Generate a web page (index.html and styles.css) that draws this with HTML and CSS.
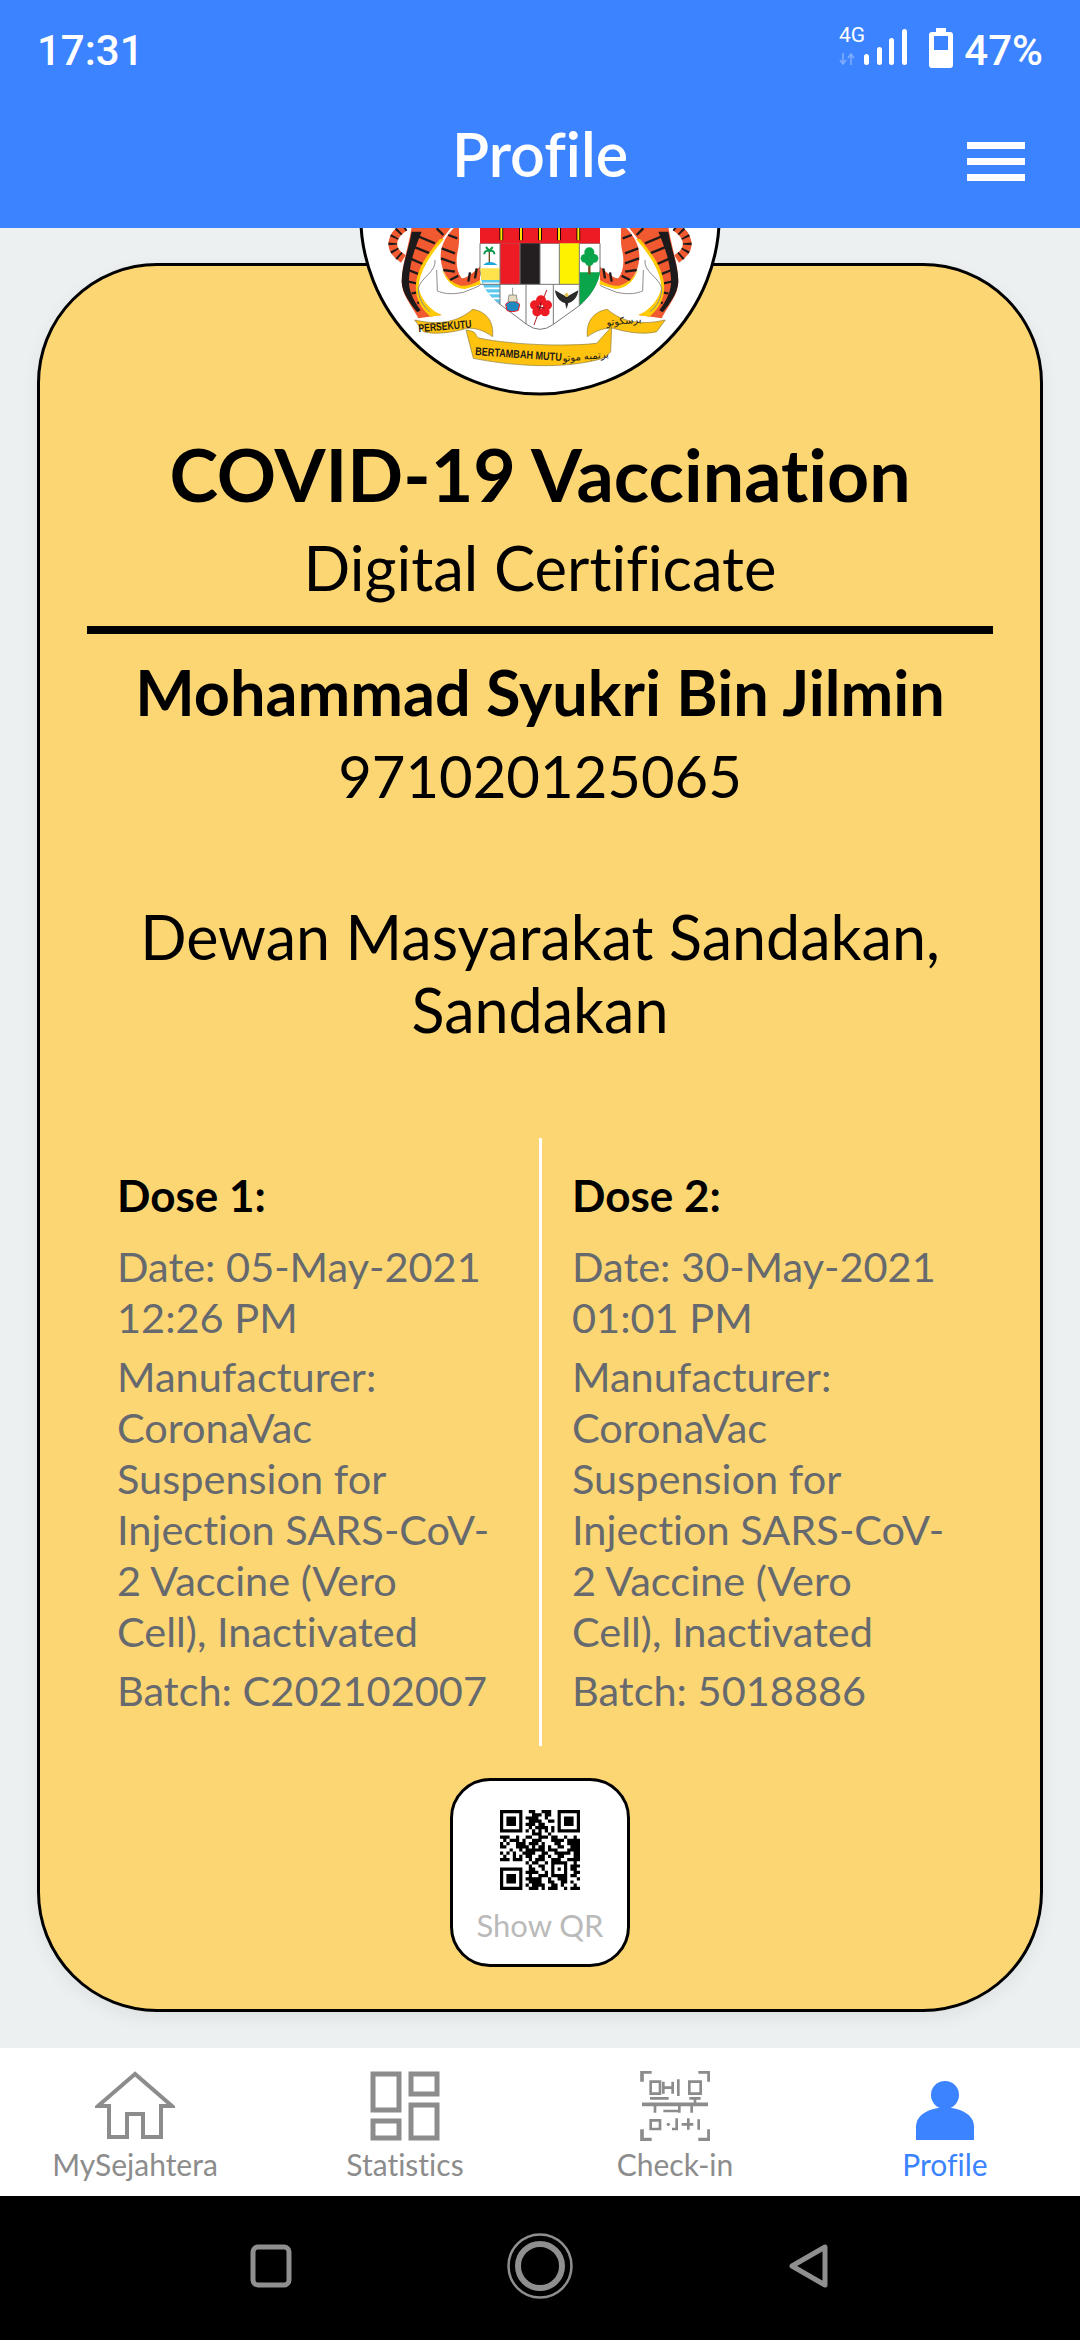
FILE: index.html
```html
<!DOCTYPE html>
<html lang="en">
<head>
    <meta charset="UTF-8">
    <meta name="viewport" content="width=device-width, initial-scale=1.0">
    <title>Profile</title>
    <link rel="stylesheet" href="styles.css">
</head>
<body>
    <header class="topbar">
        <div class="status">
            <span class="clock">17:31</span>
            <div class="status-right">
                <svg class="signal" width="70" height="64" viewBox="0 0 70 64">
                    <text x="1" y="24" class="net">4G</text>
                    <path d="M5 35v11M2 42l3 4 3-4M13 47V36M10 40l3-4 3 4" fill="none" stroke="#fff" stroke-opacity=".35" stroke-width="1.5"/>
                    <rect x="26" y="36" width="5" height="11" rx="2.5" fill="#fff"/>
                    <rect x="39" y="29" width="5" height="18" rx="2.5" fill="#fff"/>
                    <rect x="51" y="20" width="5" height="27" rx="2.5" fill="#fff"/>
                    <rect x="64" y="11" width="5" height="36" rx="2.5" fill="#fff"/>
                </svg>
                <svg class="battery" width="24" height="40" viewBox="0 0 24 40">
                    <path d="M7 0h10v4h4a3 3 0 0 1 3 3v30a3 3 0 0 1-3 3H3a3 3 0 0 1-3-3V7a3 3 0 0 1 3-3h4z" fill="#fff"/>
                    <rect x="5" y="8" width="14" height="14" fill="#3c83ff"/>
                </svg>
                <span class="percent">47%</span>
            </div>
        </div>
        <div class="titlebar">
            <h1 class="title">Profile</h1>
            <div class="burger"><i></i><i></i><i></i></div>
        </div>
    </header>

    <main class="content">
        <section class="card">
            <!-- emblem, drawn over the top of the card -->
            <svg class="emblem" width="400" height="190" viewBox="0 0 1200 570">
                <ellipse cx="600" cy="0" rx="538" ry="537" fill="#fff" stroke="#000" stroke-width="9"/>
                <g id="tiger">
                    <path d="M195 35C155 60 140 100 190 132" fill="none" stroke="#f15a31" stroke-width="26"/>
                    <path d="M195 35C155 60 140 100 190 132" fill="none" stroke="#1c1a1a" stroke-width="26" stroke-dasharray="6 15"/>
                    <path d="M215 35H335C300 80 260 130 240 175 225 210 235 250 270 285L305 300 235 310C215 270 185 240 185 200 185 150 205 100 215 35z" fill="#f15a31"/>
                    <path d="M215 50C205 110 185 150 185 200 187 235 210 265 232 292L242 286C215 250 205 220 207 190 212 130 225 100 245 50z" fill="#1c1a1a"/>
                    <path d="M225 60L285 85M220 95L270 115M210 130L255 150M205 165L238 178M205 200L230 205M215 235L235 232M232 265L250 255M290 40L310 60" fill="none" stroke="#1c1a1a" stroke-width="7"/>
                    <path d="M312 72C270 120 238 170 236 215 240 250 270 285 305 300L272 305C235 275 225 240 228 205 235 150 270 110 300 72z" fill="#ffcb05"/>
                    <path d="M345 35C320 60 300 90 302 130 305 170 325 205 360 215 385 215 410 210 420 195V155C405 165 385 190 365 190 350 170 345 140 355 100 360 70 355 50 358 35z" fill="#f15a31"/>
                    <path d="M305 160C315 195 340 222 375 222L422 208 420 195C400 208 380 214 362 212 335 205 315 185 305 160z" fill="#ffcb05"/>
                    <path d="M305 100L345 115M303 130L345 145M310 165L345 170M330 195L355 182M385 200L390 172M405 190L410 160M325 60L352 70" fill="none" stroke="#1c1a1a" stroke-width="7"/>
                    <path d="M285 135C290 170 240 190 235 220 235 250 250 275 270 290M290 165L292 228C310 235 330 240 370 232 400 220 415 215 420 210" fill="none" stroke="#8d8d8d" stroke-width="3"/>
                    <path d="M224 315C290 330 350 325 398 283 440 290 462 320 458 365 430 345 405 338 380 340 340 352 290 360 250 350z" fill="#ffc20e" stroke="#8a7a3a" stroke-width="2"/>
                </g>
                <use href="#tiger" transform="matrix(-1 0 0 1 1200 0)"/>
                <text class="ribbon" x="236" y="352" textLength="160" lengthAdjust="spacingAndGlyphs" transform="rotate(-5 236 352)">PERSEKUTU</text>
                <text class="ribbon-jawi" x="800" y="332" transform="rotate(-5 800 332)">برسكوتو</text>

                <path d="M420 85H780V165C775 205 750 245 718 272L640 328Q600 358 560 328L480 268C445 240 425 205 420 165z" fill="#fff" stroke="#777" stroke-width="3"/>
                <rect x="420" y="30" width="360" height="55" fill="#ed1c24"/>
                <path d="M484 30v46M543 30v46M600 30v46M657 30v46M715 30v46" stroke="#000" stroke-width="11"/>
                <path d="M484 30v46M543 30v46M600 30v46M657 30v46M715 30v46" stroke="#ffe500" stroke-width="6"/>
                <rect x="480" y="85" width="60" height="123" fill="#ed1c24"/>
                <rect x="540" y="85" width="60" height="123" fill="#231f20"/>
                <rect x="658" y="85" width="60" height="123" fill="#fff200"/>
                <path d="M421 160h59v35h-56z" fill="#ffe34d"/>
                <path d="M424 195H480V268C450 245 432 222 424 195z" fill="#5cc8ee"/>
                <path d="M430 205h50M436 220h44M445 235h35M458 250h22" stroke="#fff" stroke-width="5"/>
                <path d="M448 145v-40" stroke="#6d4c1d" stroke-width="4"/>
                <path d="M448 108c-15-5-15 10-15 10M448 108c15-5 15 10 15 10M448 108l-10-12M448 108l10-12" fill="none" stroke="#0a9a4a" stroke-width="6"/>
                <path d="M430 150c10-12 30-12 42 0z" fill="#1aa7d8"/>
                <path d="M718 172H780C775 210 750 245 718 272z" fill="#0aa54a"/>
                <path d="M748 178v-28" stroke="#7a4a1d" stroke-width="7"/>
                <circle cx="748" cy="112" r="15" fill="#0aa54a"/>
                <circle cx="735" cy="130" r="13" fill="#0aa54a"/>
                <circle cx="762" cy="130" r="13" fill="#0aa54a"/>
                <circle cx="748" cy="140" r="13" fill="#0aa54a"/>
                <path d="M420 208H718M480 85V268M540 85V208M600 85V208M658 85V208M718 85V272M558 208V328M640 208V328" stroke="#777" stroke-width="3" fill="none"/>
                <path d="M497 268c10-12 30-12 42 0l-4 18c-10 5-28 5-34 0z" fill="#1f8ac0" stroke="#ed1c24" stroke-width="3"/>
                <path d="M518 218v22M507 240h22l3 20h-28z" fill="#e8dcc0" stroke="#666" stroke-width="2"/>
                <path d="M582 330L600 280 620 225" fill="none" stroke="#b0202a" stroke-width="3"/>
                <g fill="#ed1c24">
                    <circle cx="603" cy="256" r="15"/>
                    <circle cx="584" cy="270" r="14"/>
                    <circle cx="622" cy="270" r="14"/>
                    <circle cx="591" cy="290" r="14"/>
                    <circle cx="615" cy="290" r="14"/>
                </g>
                <path d="M603 262l-6 24M590 275l24 4" stroke="#7a1016" stroke-width="3"/>
                <path d="M680 245C670 240 655 232 645 226 647 246 660 262 675 264L680 282 685 264C700 262 713 246 715 226 705 232 690 240 680 245z" fill="#2a2a2a"/>
                <circle cx="680" cy="240" r="6" fill="#e5c34a"/>
                <path d="M378 345C420 350 400 365 420 370 520 390 680 395 770 385L815 335 812 410C800 425 790 430 770 435 650 465 500 450 400 430z" fill="#ffc20e" stroke="#8a7a3a" stroke-width="2"/>
                <text class="ribbon" x="405" y="420" textLength="260" lengthAdjust="spacingAndGlyphs" transform="rotate(4 405 420)">BERTAMBAH MUTU</text>
                <text class="ribbon-jawi" x="668" y="440" textLength="140" transform="rotate(-5 668 440)">برتمبه موتو</text>
            </svg>

            <h2 class="heading">COVID-19 Vaccination</h2>
            <p class="subheading">Digital Certificate</p>
            <div class="rule"></div>
            <p class="name">Mohammad Syukri Bin Jilmin</p>
            <p class="ic">971020125065</p>
            <p class="place">Dewan Masyarakat Sandakan,<br>Sandakan</p>

            <div class="doses">
                <div class="dose dose-first">
                    <h3 class="dose-title">Dose 1:</h3>
                    <p>Date: 05-May-2021<br>12:26 PM</p>
                    <p>Manufacturer:<br>CoronaVac<br>Suspension for<br>Injection SARS-CoV-<br>2 Vaccine (Vero<br>Cell), Inactivated</p>
                    <p>Batch: C202102007</p>
                </div>
                <div class="dose dose-second">
                    <h3 class="dose-title">Dose 2:</h3>
                    <p>Date: 30-May-2021<br>01:01 PM</p>
                    <p>Manufacturer:<br>CoronaVac<br>Suspension for<br>Injection SARS-CoV-<br>2 Vaccine (Vero<br>Cell), Inactivated</p>
                    <p>Batch: 5018886</p>
                </div>
            </div>

            <button class="qr-btn">
                <svg class="qr" width="80" height="80" viewBox="0 0 25 25">
                    <path fill="none" stroke="#000" stroke-width="1" d="M0 .5h7M9 .5h2M13 .5h3M18 .5h7M0 1.5h1M6 1.5h1M10 1.5h3M14 1.5h2M18 1.5h1M24 1.5h1M0 2.5h1M2 2.5h3M6 2.5h1M8 2.5h4M14 2.5h1M18 2.5h1M20 2.5h3M24 2.5h1M0 3.5h1M2 3.5h3M6 3.5h1M9 3.5h4M15 3.5h2M18 3.5h1M20 3.5h3M24 3.5h1M0 4.5h1M2 4.5h3M6 4.5h1M8 4.5h3M12 4.5h2M18 4.5h1M20 4.5h3M24 4.5h1M0 5.5h1M6 5.5h1M9 5.5h1M11 5.5h4M16 5.5h1M18 5.5h1M24 5.5h1M0 6.5h7M8 6.5h1M10 6.5h1M12 6.5h1M14 6.5h1M16 6.5h1M18 6.5h7M10 7.5h3M15 7.5h1M0 8.5h3M5 8.5h1M8 8.5h2M12 8.5h3M16 8.5h2M20 8.5h1M23 8.5h1M1 9.5h1M3 9.5h3M7 9.5h1M10 9.5h3M16 9.5h4M21 9.5h4M0 10.5h1M2 10.5h1M5 10.5h3M9 10.5h3M13 10.5h1M17 10.5h2M21 10.5h4M0 11.5h2M5 11.5h4M10 11.5h1M12 11.5h2M15 11.5h1M18 11.5h2M22 11.5h3M3 12.5h1M6 12.5h1M8 12.5h6M15 12.5h3M21 12.5h4M0 13.5h1M2 13.5h1M4 13.5h1M7 13.5h4M13 13.5h2M17 13.5h5M23 13.5h2M1 14.5h1M4 14.5h1M6 14.5h1M8 14.5h2M12 14.5h2M15 14.5h1M18 14.5h2M23 14.5h2M0 15.5h3M4 15.5h3M9 15.5h1M11 15.5h3M16 15.5h3M21 15.5h4M8 16.5h1M10 16.5h2M14 16.5h1M16 16.5h5M23 16.5h1M9 17.5h1M12 17.5h2M16 17.5h1M20 17.5h1M22 17.5h3M0 18.5h7M9 18.5h2M13 18.5h1M16 18.5h1M18 18.5h1M20 18.5h1M22 18.5h2M0 19.5h1M6 19.5h1M8 19.5h4M14 19.5h1M16 19.5h1M20 19.5h1M23 19.5h2M0 20.5h1M2 20.5h3M6 20.5h1M9 20.5h1M12 20.5h3M16 20.5h5M22 20.5h2M0 21.5h1M2 21.5h3M6 21.5h1M8 21.5h5M15 21.5h1M18 21.5h3M24 21.5h1M0 22.5h1M2 22.5h3M6 22.5h1M9 22.5h4M15 22.5h2M19 22.5h2M22 22.5h1M0 23.5h1M6 23.5h1M8 23.5h1M10 23.5h4M16 23.5h2M19 23.5h1M23 23.5h1M0 24.5h7M9 24.5h3M13 24.5h1M15 24.5h3M20 24.5h1M22 24.5h3"/>
                </svg>
                <span class="qr-label">Show QR</span>
            </button>
        </section>
    </main>

    <nav class="tabs">
        <div class="tab">
            <svg width="80" height="70" viewBox="0 0 80 70">
                <path d="M40 3L3 35h11v31h18V43h16v23h18V35h11z" fill="none" stroke="#8c8c8c" stroke-width="4"/>
            </svg>
            <span>MySejahtera</span>
        </div>
        <div class="tab">
            <svg width="70" height="70" viewBox="0 0 70 70">
                <path d="M3 3h26v36H3zM41 3h26v20H41zM41 34h26v33H41zM3 50h26v17H3z" fill="none" stroke="#8c8c8c" stroke-width="5"/>
            </svg>
            <span>Statistics</span>
        </div>
        <div class="tab">
            <svg width="70" height="70" viewBox="30 30 210 210">
                <path d="M36 62V33H65M205 33H237V62M36 205V236H65M205 236H237V205" fill="none" stroke="#8c8c8c" stroke-width="11"/>
                <path d="M36 130H234" fill="none" stroke="#8c8c8c" stroke-width="11"/>
                <path d="M62 62H90V98H62zM100 62V98M128 62V98M100 80H128M145 55V105M178 62H212V98H178zM60 112H116M178 112H212M195 112V130M75 130V155M100 150H148M148 130V155M185 130V155M62 178H90V204H62zM140 172V204H126M175 172V206M155 190H190M206 175V206" fill="none" stroke="#8c8c8c" stroke-width="8"/>
                <circle cx="115" cy="190" r="5" fill="#8c8c8c"/>
            </svg>
            <span>Check-in</span>
        </div>
        <div class="tab tab-active">
            <svg width="60" height="60" viewBox="0 0 60 60">
                <ellipse cx="30" cy="14" rx="14" ry="14" fill="#3c83ff"/>
                <path d="M1 59V46c0-26 58-26 58 0v13z" fill="#3c83ff"/>
            </svg>
            <span>Profile</span>
        </div>
    </nav>

    <div class="sysbar">
        <svg width="42" height="44" viewBox="0 0 42 44"><rect x="3" y="3" width="36" height="38" rx="5" fill="none" stroke="#8f8f8f" stroke-width="5"/></svg>
        <svg width="66" height="66" viewBox="0 0 66 66"><circle cx="33" cy="33" r="31.5" fill="none" stroke="#8f8f8f" stroke-width="2.5"/><circle cx="33" cy="33" r="22" fill="none" stroke="#8f8f8f" stroke-width="6"/></svg>
        <svg width="42" height="46" viewBox="0 0 42 46"><path d="M37 4v38L4 23z" fill="none" stroke="#8f8f8f" stroke-width="5" stroke-linejoin="round"/></svg>
    </div>
</body>
</html>
```

FILE: styles.css
```css
* {
    box-sizing: border-box;
}

body {
    display: flex;
    flex-direction: column;
    width: 1080px;
    height: 2340px;
    margin: 0;
    overflow: hidden;
    background-color: #ecf0f1;
    font-family: "Lato", "Open Sans", sans-serif;
    font-variant-ligatures: none;
    color: #000;
}

h1, h2, h3, p {
    margin: 0;
}

/* Barra superior */
.topbar {
    position: relative;
    z-index: 2;
    height: 228px;
    background-color: #3c83ff;
    color: #fff;
}

.status {
    display: flex;
    justify-content: space-between;
    align-items: center;
    height: 100px;
    padding: 0 37px;
    font-family: "Roboto", sans-serif;
    font-size: 42px;
    font-weight: 500;
}

.status-right {
    display: flex;
    align-items: center;
    gap: 11px;
}

.signal {
    margin-right: 10px;
}

.battery {
    margin-bottom: 5px;
}

.net {
    font-family: "Roboto", sans-serif;
    font-size: 21px;
    font-weight: 400;
    fill: #fff;
}

.titlebar {
    position: relative;
    display: flex;
    justify-content: center;
    align-items: center;
    height: 112px;
    padding-bottom: 6px;
}

.title {
    font-size: 61px;
    font-weight: 600;
}

.burger {
    position: absolute;
    top: 42px;
    right: 55px;
    display: flex;
    flex-direction: column;
    gap: 9px;
    width: 58px;
}

.burger i {
    display: block;
    height: 7px;
    background-color: #fff;
}

/* Contenido */
.content {
    flex: 1;
    padding: 35px 37px 0;
}

.card {
    position: relative;
    display: flex;
    flex-direction: column;
    align-items: center;
    height: 1749px;
    padding-top: 166px;
    background-color: #fdd674;
    border: 3px solid #000;
    border-radius: 120px;
    box-shadow: 0 6px 18px rgba(0, 0, 0, 0.06);
    text-align: center;
}

.emblem {
    position: absolute;
    top: -51px;
    left: 300px;
}

.ribbon {
    font-family: "Liberation Sans", sans-serif;
    font-size: 34px;
    font-weight: 700;
    fill: #1c1a1a;
}

.ribbon-jawi {
    font-family: "DejaVu Sans", sans-serif;
    font-size: 30px;
    fill: #1c1a1a;
}

.heading {
    font-size: 73.5px;
    line-height: 84px;
    font-weight: 700;
}

.subheading {
    font-size: 61.5px;
    line-height: 70px;
    margin-top: 16px;
}

.rule {
    width: 906px;
    height: 8px;
    margin-top: 24px;
    background-color: #000;
}

.name {
    margin-top: 22px;
    font-size: 63px;
    line-height: 72px;
    font-weight: 700;
}

.ic {
    font-size: 58px;
    line-height: 70px;
    margin-top: 13px;
}

.place {
    margin-top: 89px;
    font-size: 61px;
    line-height: 73px;
}

.doses {
    display: grid;
    grid-template-columns: 502px 1fr;
    align-self: stretch;
    margin-top: 92px;
    text-align: left;
    font-size: 41.5px;
    line-height: 51px;
    color: #666a6e;
}

.dose {
    height: 608px;
    padding-top: 32px;
    white-space: nowrap;
}

.dose p {
    margin-top: 8px;
}

.dose-first {
    padding-left: 77px;
    border-right: 3px solid #fff;
}

.dose-second {
    padding-left: 30px;
}

.dose-title {
    font-size: 44px;
    line-height: 50px;
    font-weight: 700;
    color: #000;
    margin-bottom: 21px;
}

.qr-btn {
    display: flex;
    flex-direction: column;
    align-items: center;
    width: 180px;
    height: 189px;
    margin-top: 32px;
    padding: 29px 0 0;
    background-color: #fff;
    border: 3px solid #000;
    border-radius: 40px;
    font-family: inherit;
}

.qr-label {
    margin-top: 15px;
    font-size: 31px;
    line-height: 40px;
    color: #bababa;
}

/* Barra inferior */
.tabs {
    display: grid;
    grid-template-columns: repeat(4, 1fr);
    height: 148px;
    background-color: #fff;
}

.tab {
    display: flex;
    flex-direction: column;
    align-items: center;
    justify-content: flex-end;
    font-size: 30px;
    line-height: 38px;
    color: #8c8c8c;
    padding-bottom: 13px;
}

.tab svg {
    margin-bottom: 4px;
}

.tab-active {
    color: #3c83ff;
}

.sysbar {
    display: flex;
    align-items: center;
    justify-content: space-between;
    height: 144px;
    padding: 0 250px 4px;
    background-color: #000;
}
```
